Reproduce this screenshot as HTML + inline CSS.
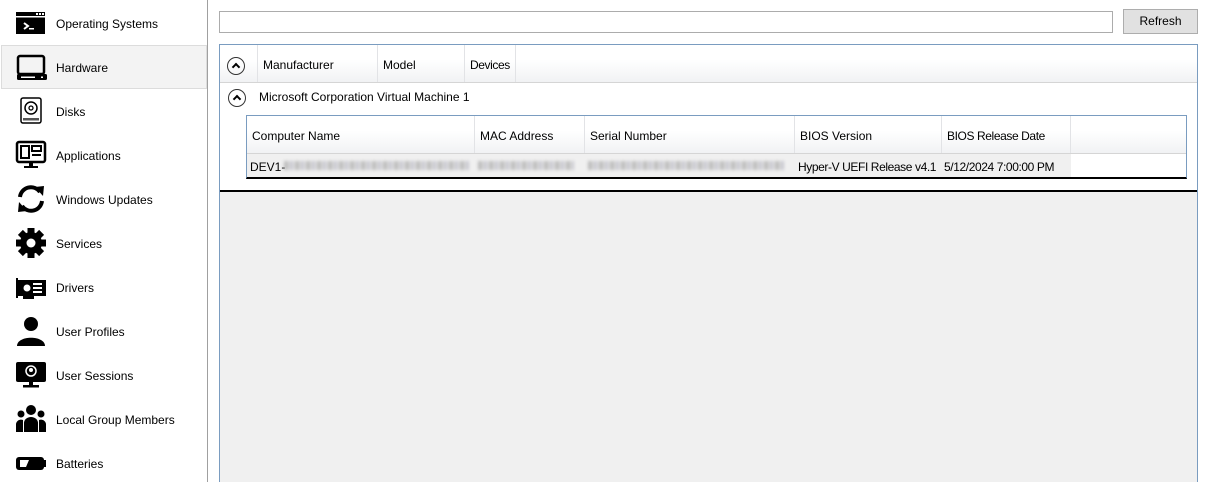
<!DOCTYPE html>
<html><head><meta charset="utf-8"><style>
*{box-sizing:border-box;margin:0;padding:0}
body{width:1207px;height:482px;background:#fff;font-family:"Liberation Sans",sans-serif;font-size:12px;color:#000;position:relative;overflow:hidden}
.abs{position:absolute}
.side{left:0;top:0;width:208px;height:482px;border-right:1px solid #a0a0a0}
.item{position:absolute;left:0;width:207px;height:44px}
.item .t{position:absolute;left:56px;top:16px}
.item svg{position:absolute;left:15px;top:7px}
.sel{background:#f3f3f3;border:1px solid #dcdcdc;left:1px;width:206px}
.sel .t{left:54px;top:15px}
.sel svg{left:14px;top:6px}
.hd{background:linear-gradient(#fff,#fff 40%,#f1f2f4);}
.col{position:absolute;top:0;height:100%;border-right:1px solid #e2e3e6}
.col span{position:absolute;left:5px;top:13px;white-space:nowrap}
.blur{position:absolute;top:161px;height:9px;filter:blur(1.6px);opacity:.75;background:repeating-linear-gradient(90deg,#aaa 0 4px,#d8d8d8 4px 6px,#b8b8c4 6px 9px,#e4e4e4 9px 11px)}
.exp{position:absolute;width:18px;height:18px;border:1.5px solid #333;border-radius:50%}
.exp:after{content:"";position:absolute;left:5px;top:6px;width:4px;height:4px;border-left:2px solid #000;border-top:2px solid #000;transform:rotate(45deg)}
.tight{letter-spacing:-0.4px;white-space:nowrap}
</style></head><body>
<div class="abs side">
 <div class="item" style="top:1px"><svg width="32" height="30" viewBox="0 0 32 30"><rect x="1" y="4" width="29" height="22" fill="#000"/><rect x="1" y="8" width="29" height="1.5" fill="#fff"/><rect x="21" y="5" width="2" height="2" fill="#fff"/><rect x="24" y="5" width="2" height="2" fill="#fff"/><rect x="27" y="5" width="2" height="2" fill="#fff"/><path d="M9 15l4 3-4 3" stroke="#fff" stroke-width="2" fill="none"/><rect x="14" y="20" width="5" height="1.5" fill="#fff"/></svg><span class="t">Operating Systems</span></div>
 <div class="item sel" style="top:45px"><svg width="32" height="30" viewBox="0 0 32 30"><rect x="2" y="4" width="26" height="18" rx="2" fill="none" stroke="#000" stroke-width="2.5"/><rect x="1" y="22" width="30" height="6" rx="1.5" fill="#000"/><rect x="5" y="24.5" width="14" height="1.5" fill="#fff"/><rect x="25" y="24.5" width="2" height="1.5" fill="#fff"/></svg><span class="t">Hardware</span></div>
 <div class="item" style="top:89px"><svg width="32" height="30" viewBox="0 0 32 30"><rect x="6" y="2" width="20" height="25" rx="2" fill="none" stroke="#000" stroke-width="1.5"/><circle cx="16" cy="12" r="6" fill="none" stroke="#000" stroke-width="1.5"/><circle cx="16" cy="12" r="2" fill="none" stroke="#000" stroke-width="1.3"/><rect x="8" y="22" width="16" height="2.5" fill="#555"/></svg><span class="t">Disks</span></div>
 <div class="item" style="top:133px"><svg width="32" height="30" viewBox="0 0 32 30"><rect x="2" y="2" width="28" height="20" rx="2" fill="none" stroke="#000" stroke-width="2.5"/><rect x="6" y="6" width="8" height="12" fill="none" stroke="#000" stroke-width="2"/><rect x="17" y="6" width="9" height="5" fill="none" stroke="#000" stroke-width="2"/><rect x="17" y="14" width="9" height="2" fill="#000"/><rect x="14" y="22" width="4" height="5" fill="#000"/><rect x="9" y="26" width="14" height="2" fill="#000"/></svg><span class="t">Applications</span></div>
 <div class="item" style="top:177px"><svg width="32" height="30" viewBox="0 0 32 30"><path d="M5 13A11 11 0 0 1 25 8" fill="none" stroke="#000" stroke-width="4"/><path d="M20 3l9-1-1 10z" fill="#000"/><path d="M27 17A11 11 0 0 1 7 22" fill="none" stroke="#000" stroke-width="4"/><path d="M12 27l-9 1 1-10z" fill="#000"/></svg><span class="t">Windows Updates</span></div>
 <div class="item" style="top:221px"><svg width="32" height="30" viewBox="0 0 32 30"><g transform="translate(16 15)"><circle r="11" fill="#000"/><g fill="#000"><rect x="-3.5" y="-15" width="7" height="30"/><rect x="-3.5" y="-15" width="7" height="30" transform="rotate(45)"/><rect x="-3.5" y="-15" width="7" height="30" transform="rotate(90)"/><rect x="-3.5" y="-15" width="7" height="30" transform="rotate(135)"/></g><circle r="4.5" fill="#fff"/></g></svg><span class="t">Services</span></div>
 <div class="item" style="top:265px"><svg width="32" height="30" viewBox="0 0 32 30"><path d="M1 6h2v20H1z M3 8h28v16H19v3H8v-3H3z" fill="#000"/><circle cx="12" cy="16" r="3.5" fill="#fff"/><rect x="18" y="11" width="9" height="2" fill="#fff"/><rect x="18" y="15" width="9" height="2" fill="#fff"/><rect x="18" y="19" width="9" height="2" fill="#fff"/></svg><span class="t">Drivers</span></div>
 <div class="item" style="top:309px"><svg width="32" height="30" viewBox="0 0 32 30"><circle cx="16" cy="8" r="7" fill="#000"/><path d="M2 30c0-11 28-11 28 0z" fill="#000"/></svg><span class="t">User Profiles</span></div>
 <div class="item" style="top:353px"><svg width="32" height="30" viewBox="0 0 32 30"><rect x="1" y="2" width="30" height="20" rx="2" fill="#000"/><circle cx="16" cy="11" r="5" fill="none" stroke="#fff" stroke-width="1.5"/><circle cx="16" cy="10" r="2" fill="#fff"/><rect x="14" y="22" width="4" height="4" fill="#000"/><rect x="8" y="25" width="16" height="2.5" fill="#000"/></svg><span class="t">User Sessions</span></div>
 <div class="item" style="top:397px"><svg width="32" height="30" viewBox="0 0 32 30"><circle cx="16" cy="6" r="5" fill="#000"/><circle cx="6" cy="10" r="3.5" fill="#000"/><circle cx="26" cy="10" r="3.5" fill="#000"/><path d="M9 28v-9a7 6 0 0 1 14 0v9z" fill="#000"/><path d="M1 28v-8a5 5 0 0 1 7-4v12z M31 28v-8a5 5 0 0 0-7-4v12z" fill="#000"/></svg><span class="t">Local Group Members</span></div>
 <div class="item" style="top:441px"><svg width="32" height="30" viewBox="0 0 32 30"><rect x="1" y="9" width="28" height="13" rx="3" fill="#000"/><rect x="29" y="12" width="2" height="7" fill="#000"/><path d="M5 12h9l-3 7H5z" fill="#fff"/></svg><span class="t">Batteries</span></div>
</div>

<div class="abs" style="left:219px;top:11px;width:894px;height:22px;border:1px solid #acacac"></div>
<div class="abs" style="left:1123px;top:9px;width:75px;height:25px;background:#e1e1e1;border:1px solid #adadad;text-align:center;line-height:23px">Refresh</div>

<div class="abs" style="left:219px;top:44px;width:979px;height:438px;border:1px solid #7a9cc0;border-bottom:none;background:#fff"></div>
<div class="abs hd" style="left:220px;top:45px;width:977px;height:38px;border-bottom:1px solid #d5d5d5">
 <div class="col" style="left:0;width:38px"><div class="exp" style="left:7px;top:12px"></div></div>
 <div class="col" style="left:38px;width:120px"><span>Manufacturer</span></div>
 <div class="col" style="left:158px;width:87px"><span>Model</span></div>
 <div class="col" style="left:245px;width:51px"><span class="tight">Devices</span></div>
</div>
<div class="exp" style="left:228px;top:89px"></div>
<div class="abs" style="left:259px;top:90px">Microsoft Corporation Virtual Machine 1</div>

<div class="abs" style="left:246px;top:115px;width:941px;height:64px;border:1px solid #7a9cc0;border-bottom:2px solid #000"></div>
<div class="abs hd" style="left:247px;top:116px;width:939px;height:38px;border-bottom:1px solid #d5d5d5">
 <div class="col" style="left:0;width:228px"><span>Computer Name</span></div>
 <div class="col" style="left:228px;width:110px"><span>MAC Address</span></div>
 <div class="col" style="left:338px;width:210px"><span>Serial Number</span></div>
 <div class="col" style="left:548px;width:147px"><span>BIOS Version</span></div>
 <div class="col" style="left:695px;width:129px"><span class="tight">BIOS Release Date</span></div>
</div>
<div class="abs" style="left:247px;top:154px;width:824px;height:23px;background:#f0f0f0"></div>
<div class="abs" style="left:250px;top:160px">DEV1-</div>
<div class="blur" style="left:284px;width:185px"></div>
<div class="blur" style="left:478px;width:96px"></div>
<div class="blur" style="left:588px;width:196px"></div>
<div class="abs tight" style="left:798px;top:160px">Hyper-V UEFI Release v4.1</div>
<div class="abs tight" style="left:944px;top:160px">5/12/2024 7:00:00 PM</div>

<div class="abs" style="left:220px;top:190px;width:977px;height:292px;background:#f0f0f0;border-top:2px solid #000"></div>
</body></html>
